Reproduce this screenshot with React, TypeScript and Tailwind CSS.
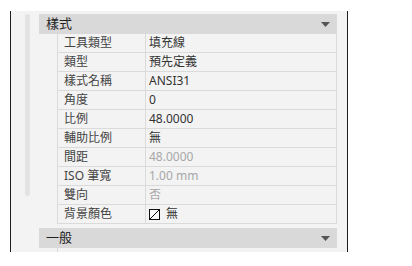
import React from "react";

type Row = { label: string; value: string; dim?: boolean; swatch?: boolean };

const rows: Row[] = [
  { label: "工具類型", value: "填充線" },
  { label: "類型", value: "預先定義" },
  { label: "樣式名稱", value: "ANSI31" },
  { label: "角度", value: "0" },
  { label: "比例", value: "48.0000" },
  { label: "輔助比例", value: "無" },
  { label: "間距", value: "48.0000", dim: true },
  { label: "ISO 筆寬", value: "1.00 mm", dim: true },
  { label: "雙向", value: "否", dim: true },
  { label: "背景顏色", value: "無", swatch: true },
];

const font = { fontFamily: '"Noto Sans", "Noto Sans CJK TC", sans-serif' };

function Caret() {
  return (
    <svg width="9" height="5" viewBox="0 0 9 5" aria-hidden="true">
      <path d="M0 0H9L4.5 5Z" fill="#555" />
    </svg>
  );
}

function Header({ title }: { title: string }) {
  return (
    <div className="flex h-[20px] items-center justify-between bg-[#d9d9d9] pl-[7px] pr-[7px] text-[13px] text-[#222]">
      <span>{title}</span>
      <Caret />
    </div>
  );
}

export default function App() {
  return (
    <div className="h-[266px] w-[412px] bg-white" style={font}>
      <div className="flex h-[252px] pt-[11px] pl-[10px]">
        <div className="flex h-[241px] w-[338px] border-x border-[#1e1e1e] bg-[#f3f3f3] pt-[3px]">
          <div className="w-[28px] shrink-0 pl-[14px]">
            <div className="h-[182px] w-[5px] rounded-full bg-[#e3e3e3]" />
          </div>
          <div className="mr-[10px] flex flex-1 flex-col">
            <Header title="樣式" />
            <div className="ml-[18px] border-x border-[#dadada]">
              {rows.map((r) => (
                <div key={r.label} className="flex h-[19px] items-center border-b border-[#dadada] text-[12px] leading-none">
                  <div className="flex h-full w-[88px] shrink-0 items-center border-r border-[#dadada] pl-[6px] text-[#444]">
                    {r.label}
                  </div>
                  <div className={`flex items-center pl-[3px] ${r.dim ? "text-[#a8a8a8]" : "text-[#333]"}`}>
                    {r.swatch && (
                      <svg width="11" height="11" viewBox="0 0 11 11" className="mr-[6px]" aria-hidden="true">
                        <rect x="0.5" y="0.5" width="10" height="10" fill="#fff" stroke="#111" />
                        <path d="M1 10L10 1" stroke="#111" />
                      </svg>
                    )}
                    {r.value}
                  </div>
                </div>
              ))}
            </div>
            <div className="mt-[4px]">
              <Header title="一般" />
            </div>
            <div className="ml-[18px] flex-1 border-l border-[#dadada]" />
          </div>
        </div>
      </div>
    </div>
  );
}
